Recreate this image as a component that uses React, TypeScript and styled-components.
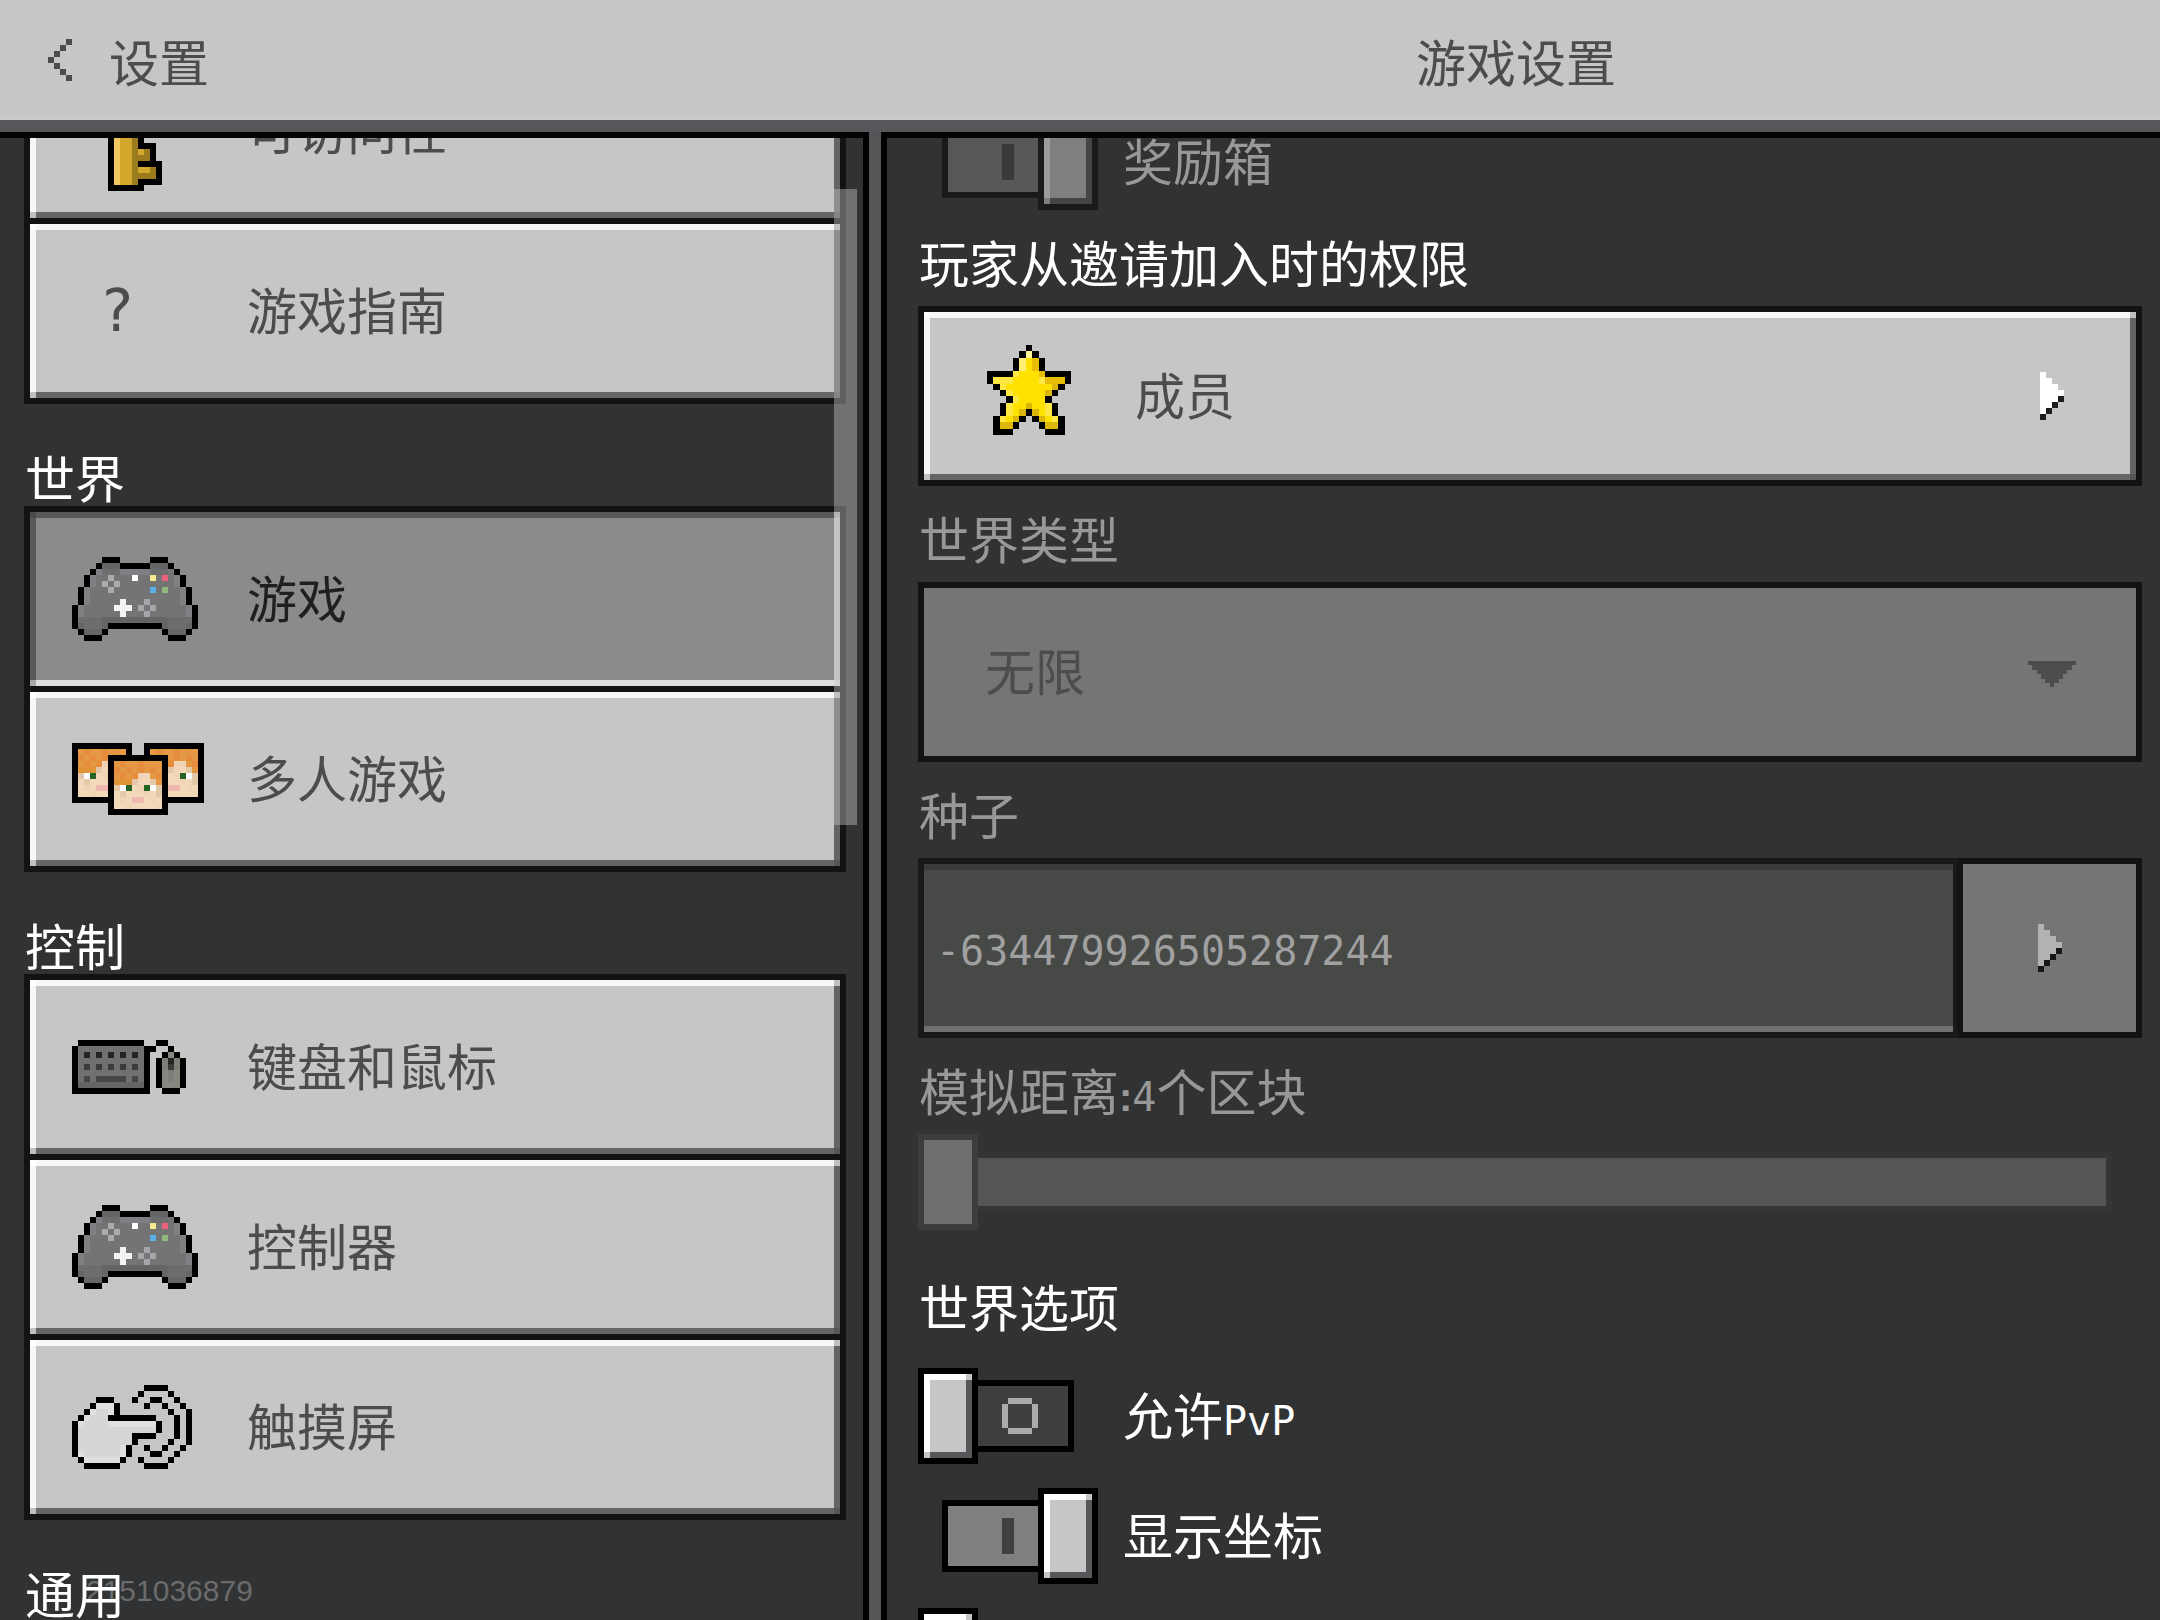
import React from 'react';
import styled, { createGlobalStyle, css } from 'styled-components';

const GlobalStyle = createGlobalStyle`
  *, *::before, *::after { box-sizing: border-box; }
  html, body { margin: 0; background: #313233; }
  body, button, select, input {
    font-family: "Noto Sans CJK SC", "Noto Sans", sans-serif;
    font-size: 50px;
    font-weight: 400;
  }
`;

/* ---------- pixel drawings ---------- */

type Palette = Record<string, string>;
type Sprite = string[];

const pixels = (rows: Sprite, palette: Palette, dx = 0, dy = 0) => {
  const out: React.ReactElement[] = [];
  rows.forEach((row, y) => {
    let x = 0;
    while (x < row.length) {
      const ch = row[x];
      let end = x + 1;
      while (end < row.length && row[end] === ch) end += 1;
      if (ch !== '.') {
        out.push(
          <rect key={`${dx}-${dy}-${x}-${y}`} x={x + dx} y={y + dy} width={end - x} height={1} fill={palette[ch]} />,
        );
      }
      x = end;
    }
  });
  return out;
};

const Svg = styled.svg`
  display: block;
  flex: none;
  shape-rendering: crispEdges;
`;

interface PixelArtProps {
  rows: Sprite;
  palette: Palette;
  width?: number;
  height?: number;
}

const PixelArt = ({ rows, palette, width, height }: PixelArtProps) => (
  <Svg
    aria-hidden="true"
    width={width ?? rows[0].length * 6}
    height={height ?? rows.length * 6}
    viewBox={`0 0 ${rows[0].length} ${rows.length}`}
    preserveAspectRatio="none"
  >
    {pixels(rows, palette)}
  </Svg>
);

const CONTROLLER: Sprite = [
  '.....KKK.....KKK.....',
  '....KDDDKKKKKDDDK....',
  '...KLCCCLLLLLCCCBK...',
  '..KLBBABBBWBBYBRBLK..',
  '..KLBABABBBBBBBBBLK..',
  '.KLBBBABBBBBBUBGBBLK.',
  '.KLBBBBBBBBBBBBBBBLK.',
  '.KLBBBBBwBBBaBBBBBLK.',
  'KLBBBBBwwwBaBaBBBBBLK',
  'KLBBBBBBwBBBaBBBBBBLK',
  'KCCCCDDDDDDDDDDDCCCCK',
  'KDCCCDKKKKKKKKKDCCCDK',
  '.KDDDK.........KDDDK.',
  '..KKK...........KKK..',
];
const CONTROLLER_COLORS: Palette = {
  K: '#000', D: '#656565', C: '#6d6d6d', B: '#747474', L: '#807f83', A: '#ababab', a: '#a4a6ab',
  W: '#fff', w: '#f3f3f3', Y: '#f5e98b', R: '#ec5f78', U: '#58b0e3', G: '#93b87f',
};

const KEYBOARD: Sprite = [
  '.KKKKKKKKKKK..KK...',
  'KBBBBBBBBBBBKK..K..',
  'KBXBXBXBXBXBK..KMK.',
  'KBBBBBBBBBBBK.KNXNK',
  'KBYBYBYBYBYBK.KNYNK',
  'KBBBBBBBBBBBK.KMNMK',
  'KBZBZZZZZBZBK.KMNMK',
  'KDDDDDDDDDDDK.KMMMK',
  'KKKKKKKKKKKKK..KKK.',
];
const KEYBOARD_COLORS: Palette = {
  K: '#000', B: '#707070', D: '#656565', X: '#242424', Y: '#3b3b3b', Z: '#464646', M: '#878680', N: '#7e7d78',
};

const TOUCH: Sprite = [
  '............KKKK....',
  '...........K....K...',
  '....KKK...K..KK..K..',
  '...KlllK....K..K..K.',
  '..KlddlK........K..K',
  '.KldddKKKKKKKK...K.K',
  'KlddddllllllllK..K.K',
  'KdddddddddddddK..K.K',
  'KdddddddddKKKK...K.K',
  'KdddddddddK.....K..K',
  'KdddddddlK..K..K..K.',
  'KlddddddlK...KK..K..',
  '.KllllllK..K....K...',
  '..KKKKKK....KKKK....',
];
const TOUCH_COLORS: Palette = { K: '#000', l: '#e0e0e0', d: '#d6d6d6' };

const KEY: Sprite = [
  '........KKKKK...',
  '.......KlGGGdK..',
  '......KlGGGGGdK.',
  '......KlGKKKGdK.',
  '......KlGK.KGdK.',
  '......KlGKKKGdK.',
  '......KlGGGGGdK.',
  '.......KlGGGdK..',
  '......KKlGGdKK..',
  '......KlGGdK....',
  '......KlGGdK....',
  '......KlGGdK....',
  '......KlGGdKKK..',
  '......KlGGdGdK..',
  '......KlGGdddK..',
  '......KlGGdKKKK.',
  '......KlGGdGGdK.',
  '......KlGGddddK.',
  '......KlGGdKKKK.',
  '......KKKKKK....',
];
const KEY_COLORS: Palette = { K: '#000', l: '#f1c85e', G: '#d3a72b', d: '#9c7a1e' };

const STAR: Sprite = [
  '......K......',
  '.....KhK.....',
  '....KlydK....',
  '....KlydK....',
  'KKKKmyyydKKKK',
  'KmmmyyyymdddK',
  '.KmyyyyyyyDK.',
  '..KmyyyyyDK..',
  '...KmyyyyK...',
  '..KmyyDyymK..',
  '..KmyDKDymK..',
  '.KmyDK.KDymK.',
  '.KDDK...KDDK.',
  '.KKK.....KKK.',
];
const STAR_COLORS: Palette = {
  K: '#000', h: '#fff59b', l: '#ffef76', m: '#ffe844', y: '#ffe100', d: '#e8bf00', D: '#dcb70b',
};

const FACE: Sprite = [
  'KKKKKKKKKK',
  'KoOooOoooK',
  'KOoOoOoOoK',
  'KoOoOTToOK',
  'KdddtSStoK',
  'KtWGSTGWtK',
  'KStSSSTStK',
  'KSTSPPSTSK',
  'KSSTSSSSTK',
  'KKKKKKKKKK',
];
const FACE_COLORS: Palette = {
  K: '#000', O: '#e58c3d', o: '#e59844', d: '#de9437', t: '#e3c9a8', T: '#efd5b6', S: '#f3d9b9',
  W: '#fff', G: '#246424', P: '#efb9b1',
};

const PlayersIcon = () => (
  <Svg aria-hidden="true" width={132} height={72} viewBox="0 0 22 12">
    {pixels(FACE, FACE_COLORS, 0, 0)}
    {pixels(FACE, FACE_COLORS, 12, 0)}
    {pixels(FACE, FACE_COLORS, 6, 2)}
  </Svg>
);

const CHEVRON: Sprite = ['...K', '..K.', '.K..', 'K...', '.K..', '..K.', '...K'];
const ARROW: Sprite = ['W...', 'WW..', 'WWW.', 'WWWW', 'WWWK', 'WWK.', 'WK..', 'K...'];
const RING: Sprite = ['.AAAA.', 'A....A', 'A....A', 'A....A', 'A....A', '.AAAA.'];

const DropIcon = () => (
  <Svg aria-hidden="true" width={48} height={26} viewBox="0 0 48 26" fill="#4c4c4c">
    <rect x={0} y={0} width={48} height={4} />
    <rect x={4} y={4} width={40} height={5} />
    <rect x={9} y={9} width={30} height={4} />
    <rect x={13} y={13} width={22} height={5} />
    <rect x={17} y={18} width={14} height={4} />
    <rect x={22} y={22} width={4} height={4} />
  </Svg>
);

/* ---------- shared styles ---------- */

interface Bevel {
  face: string;
  top: string;
  right: string;
  bottom: string;
  left: string;
  topLeft: string;
  mixed: string;
  bottomRight: string;
}

const RAISED: Bevel = {
  face: '#c6c6c6', top: '#f7f7f7', right: '#656465', bottom: '#656565', left: '#f7f7f7',
  topLeft: '#fff', mixed: '#c0c0c0', bottomRight: '#575557',
};
const PRESSED: Bevel = {
  face: '#8b8b8b', top: '#585858', right: '#c4c4c4', bottom: '#dedede', left: '#585858',
  topLeft: '#4b4b4b', mixed: '#a9a9a9', bottomRight: '#dedede',
};
const THUMB: Bevel = {
  face: '#c6c6c6', top: '#fff', right: '#58565a', bottom: '#58565a', left: '#fff',
  topLeft: '#fff', mixed: '#c6c6c6', bottomRight: '#58565a',
};
const THUMB_OFF: Bevel = {
  face: '#7f7f7f', top: '#9c9c9c', right: '#444', bottom: '#444', left: '#9c9c9c',
  topLeft: '#9c9c9c', mixed: '#7f7f7f', bottomRight: '#444',
};

const fill = (color: string) => `linear-gradient(${color}, ${color})`;

const bevel = (b: Bevel) => css`
  background:
    ${fill(b.topLeft)} left top / 6px 6px no-repeat,
    ${fill(b.mixed)} right top / 6px 6px no-repeat,
    ${fill(b.mixed)} left bottom / 6px 6px no-repeat,
    ${fill(b.bottomRight)} right bottom / 6px 6px no-repeat,
    ${fill(b.top)} left top / 100% 6px no-repeat,
    ${fill(b.bottom)} left bottom / 100% 6px no-repeat,
    ${fill(b.left)} left top / 6px 100% no-repeat,
    ${fill(b.right)} right top / 6px 100% no-repeat,
    ${b.face};
  background-origin: padding-box;
  background-clip: padding-box;
`;

const Text = styled.span<{ $color?: string }>`
  display: block;
  padding-bottom: 6px;
  line-height: 48px;
  white-space: nowrap;
  color: ${(p) => p.$color ?? 'inherit'};
`;

const Mono = styled.span`
  font-family: "DejaVu Sans Mono", monospace;
  font-size: 40px;
  line-height: 0;
`;

const Colon = styled.span`
  font-family: "Liberation Sans", sans-serif;
  font-size: 40px;
  font-weight: 700;
  line-height: 0;
`;

/* ---------- frame ---------- */

const Screen = styled.div`
  display: flex;
  flex-direction: column;
  height: 100vh;
  overflow: hidden;
  position: relative;
  color: #fff;
`;

const Header = styled.header`
  display: grid;
  grid-template-columns: 872fr 1288fr;
  align-items: center;
  flex: none;
  height: 138px;
  background: #c6c6c6;
  border-bottom: 6px solid #050505;
  box-shadow: inset 0 -12px #58565a, inset 0 -18px #c8c9ca;
  padding-bottom: 12px;
  color: #4c4c4c;
`;

const BackButton = styled.button`
  display: flex;
  align-items: center;
  gap: 37px;
  justify-self: start;
  height: 120px;
  padding: 0 0 0 48px;
  border: 0;
  background: none;
  color: inherit;
`;

const HeaderText = styled(Text)`
  padding: 0;
`;

const Title = styled.h1`
  margin: 0;
  font-size: inherit;
  font-weight: inherit;
  text-align: center;
`;

const Body = styled.div`
  display: grid;
  grid-template-columns: 863fr 24px 1273fr;
  flex: 1;
  min-height: 0;
`;

const Divider = styled.div`
  margin-top: -6px;
  background: #555557;
  border: solid #000;
  border-width: 0 6px;
`;

/* ---------- left column ---------- */

const Sidebar = styled.nav`
  position: relative;
  overflow: hidden;
  padding: 0 17px 0 24px;
`;

const MenuScroll = styled.div`
  margin-top: -100px;
`;

const SectionTitle = styled.h2`
  margin: 0;
  padding: 48px 0 0 1px;
  font-size: inherit;
  font-weight: inherit;
`;

const Menu = styled.ul`
  margin: 0;
  padding: 0;
  list-style: none;
`;

const MenuItem = styled.li`
  & + & {
    margin-top: -6px;
  }
`;

const MenuButton = styled.button<{ $active?: boolean }>`
  display: flex;
  align-items: center;
  width: 100%;
  height: 186px;
  padding: 0 42px;
  border: 6px solid #131313;
  color: ${(p) => (p.$active ? '#1f1f1f' : '#4c4c4c')};
  ${(p) => bevel(p.$active ? PRESSED : RAISED)}
`;

const MenuIcon = styled.span`
  flex: none;
  width: 175px;
`;

const HelpMark = styled.span`
  display: block;
  width: 90px;
  font-family: "DejaVu Sans Mono", monospace;
  font-size: 58px;
  line-height: 60px;
  text-align: center;
`;

const ScrollThumb = styled.div`
  position: absolute;
  top: 51px;
  right: 6px;
  width: 23px;
  height: 636px;
  background: rgba(198, 198, 198, 0.43);
`;

/* ---------- right column ---------- */

const Panel = styled.main`
  overflow: hidden;
  padding: 0 18px 0 31px;
`;

const PanelScroll = styled.div`
  margin-top: -24px;
`;

const FieldLabel = styled.label`
  display: block;
  height: 96px;
  padding: 27px 0 0 1px;
  color: #989898;
`;

const FieldTitle = styled.h2`
  height: 96px;
  margin: 0;
  padding: 27px 0 0 1px;
  font-size: inherit;
  font-weight: inherit;
`;

const OptionsTitle = styled.h2`
  height: 138px;
  margin: 0;
  padding: 51px 0 0 1px;
  font-size: inherit;
  font-weight: inherit;
`;

const ChoiceButton = styled.button`
  display: flex;
  align-items: center;
  width: 100%;
  height: 180px;
  padding: 0 72px 0 63px;
  border: 6px solid #131313;
  color: #4c4c4c;
  ${bevel(RAISED)}
`;

const ChoiceIcon = styled.span`
  flex: none;
  width: 148px;
  padding-bottom: 12px;
`;

const ChoiceText = styled(Text)`
  flex: 1;
  text-align: left;
`;

const SelectBox = styled.div`
  position: relative;
`;

const Select = styled.select`
  display: block;
  width: 100%;
  height: 180px;
  padding: 0 114px 6px 61px;
  appearance: none;
  background: #757575;
  border: 6px solid #131313;
  border-radius: 0;
  color: #4c4c4c;
  opacity: 1;
`;

const SelectArrow = styled.span`
  position: absolute;
  top: 79px;
  right: 66px;
  pointer-events: none;
`;

const SeedRow = styled.div`
  display: flex;
`;

const SeedInput = styled.input`
  flex: 1;
  min-width: 0;
  height: 180px;
  padding: 6px 12px 0;
  background: #474947;
  border: 6px solid #171a18;
  border-radius: 0;
  box-shadow: inset 0 6px #3b3b3b, inset 0 -6px #707070;
  font-family: "DejaVu Sans Mono", monospace;
  font-size: 40px;
  color: #a0a0a0;
`;

const SeedButton = styled.button`
  display: flex;
  align-items: center;
  justify-content: center;
  width: 185px;
  height: 180px;
  margin-left: -2px;
  padding: 0;
  background: #757575;
  border: 6px solid #131313;
`;

const Slider = styled.input`
  display: block;
  width: calc(100% - 30px);
  height: 96px;
  margin: 0;
  appearance: none;
  background: none;

  &::-webkit-slider-runnable-track {
    height: 60px;
    background: #555;
    box-shadow: inset 0 0 0 6px #353535;
  }

  &::-webkit-slider-thumb {
    appearance: none;
    width: 60px;
    height: 96px;
    margin-top: -18px;
    background: #707070;
    border: 6px solid #3d3d3d;
    border-radius: 0;
  }
`;

const OptionRow = styled.label`
  display: flex;
  align-items: center;
  gap: 25px;
  height: 96px;

  & + & {
    margin-top: 24px;
  }
`;

const ToggleBox = styled.span`
  display: grid;
  flex: none;
  align-items: center;
  width: 180px;

  & > * {
    grid-area: 1 / 1;
  }
`;

const ToggleInput = styled.input`
  width: 100%;
  height: 100%;
  margin: 0;
  opacity: 0;
`;

const Track = styled.span<{ $on: boolean; $off?: boolean }>`
  display: flex;
  align-items: center;
  justify-self: center;
  width: 132px;
  height: 72px;
  padding-left: 54px;
  border: 6px solid ${(p) => (p.$off ? '#181b19' : '#000')};
  background: ${(p) => (p.$off ? '#565856' : p.$on ? '#7f7f7f' : '#3f3f3f')};
`;

const TrackBar = styled.span<{ $off?: boolean }>`
  width: 12px;
  height: 36px;
  background: ${(p) => (p.$off ? '#3a3a3a' : '#404040')};
`;

const Thumb = styled.span<{ $on: boolean; $off?: boolean }>`
  justify-self: ${(p) => (p.$on ? 'end' : 'start')};
  width: 60px;
  height: 96px;
  border: 6px solid ${(p) => (p.$off ? '#181b19' : '#000')};
  ${(p) => bevel(p.$off ? THUMB_OFF : THUMB)}
`;

const Watermark = styled.div`
  position: absolute;
  left: 86px;
  bottom: 11px;
  font-family: "Liberation Sans", Arial, sans-serif;
  font-size: 30px;
  line-height: 36px;
  color: rgba(255, 255, 255, 0.29);
`;

/* ---------- parts ---------- */

interface EntryProps {
  icon: React.ReactNode;
  label: string;
  active?: boolean;
}

const Entry = ({ icon, label, active }: EntryProps) => (
  <MenuItem>
    <MenuButton type="button" $active={active} aria-current={active ? 'page' : undefined}>
      <MenuIcon>{icon}</MenuIcon>
      <Text>{label}</Text>
    </MenuButton>
  </MenuItem>
);

interface OptionProps {
  children: React.ReactNode;
  on?: boolean;
  disabled?: boolean;
}

const Option = ({ children, on = false, disabled }: OptionProps) => {
  const [checked, setChecked] = React.useState(on);
  return (
    <OptionRow>
      <ToggleBox>
        <ToggleInput
          type="checkbox"
          checked={checked}
          disabled={disabled}
          onChange={(e) => setChecked(e.target.checked)}
        />
        <Track $on={checked} $off={disabled}>
          {checked ? <TrackBar $off={disabled} /> : <PixelArt rows={RING} palette={{ A: '#ababab' }} />}
        </Track>
        <Thumb $on={checked} $off={disabled} />
      </ToggleBox>
      <Text $color={disabled ? '#989898' : '#fff'}>{children}</Text>
    </OptionRow>
  );
};

export default function App() {
  return (
    <Screen>
      <GlobalStyle />
      <Header>
        <BackButton type="button">
          <PixelArt rows={CHEVRON} palette={{ K: '#4c4c4c' }} />
          <HeaderText>设置</HeaderText>
        </BackButton>
        <Title>
          <HeaderText>游戏设置</HeaderText>
        </Title>
      </Header>

      <Body>
        <Sidebar>
          <MenuScroll>
            <Menu>
              <Entry icon={<PixelArt rows={KEY} palette={KEY_COLORS} />} label="可访问性" />
              <Entry icon={<HelpMark>?</HelpMark>} label="游戏指南" />
            </Menu>
            <SectionTitle>
              <Text>世界</Text>
            </SectionTitle>
            <Menu>
              <Entry active icon={<PixelArt rows={CONTROLLER} palette={CONTROLLER_COLORS} />} label="游戏" />
              <Entry icon={<PlayersIcon />} label="多人游戏" />
            </Menu>
            <SectionTitle>
              <Text>控制</Text>
            </SectionTitle>
            <Menu>
              <Entry icon={<PixelArt rows={KEYBOARD} palette={KEYBOARD_COLORS} />} label="键盘和鼠标" />
              <Entry icon={<PixelArt rows={CONTROLLER} palette={CONTROLLER_COLORS} />} label="控制器" />
              <Entry icon={<PixelArt rows={TOUCH} palette={TOUCH_COLORS} />} label="触摸屏" />
            </Menu>
            <SectionTitle>
              <Text>通用</Text>
            </SectionTitle>
          </MenuScroll>
          <ScrollThumb />
        </Sidebar>

        <Divider />

        <Panel>
          <PanelScroll>
            <Option on disabled>
              奖励箱
            </Option>

            <FieldTitle>
              <Text>玩家从邀请加入时的权限</Text>
            </FieldTitle>
            <ChoiceButton type="button">
              <ChoiceIcon>
                <PixelArt rows={STAR} palette={STAR_COLORS} width={84} height={90} />
              </ChoiceIcon>
              <ChoiceText>成员</ChoiceText>
              <PixelArt rows={ARROW} palette={{ W: '#fff', K: '#1d1d1d' }} />
            </ChoiceButton>

            <FieldLabel htmlFor="world-type">
              <Text>世界类型</Text>
            </FieldLabel>
            <SelectBox>
              <Select id="world-type" disabled defaultValue="infinite">
                <option value="infinite">无限</option>
              </Select>
              <SelectArrow>
                <DropIcon />
              </SelectArrow>
            </SelectBox>

            <FieldLabel htmlFor="seed">
              <Text>种子</Text>
            </FieldLabel>
            <SeedRow>
              <SeedInput id="seed" type="text" readOnly value="-634479926505287244" />
              <SeedButton type="button" disabled aria-label="种子">
                <PixelArt rows={ARROW} palette={{ W: '#b2b2b2', K: '#171717' }} />
              </SeedButton>
            </SeedRow>

            <FieldLabel htmlFor="distance">
              <Text>
                模拟距离<Colon>:</Colon>
                <Mono>4</Mono>个区块
              </Text>
            </FieldLabel>
            <Slider id="distance" type="range" min={4} max={12} defaultValue={4} disabled />

            <OptionsTitle>
              <Text>世界选项</Text>
            </OptionsTitle>
            <Option>
              允许<Mono>PvP</Mono>
            </Option>
            <Option on>显示坐标</Option>
            <Option>火焰蔓延</Option>
          </PanelScroll>
        </Panel>
      </Body>

      <Watermark>2151036879</Watermark>
    </Screen>
  );
}
